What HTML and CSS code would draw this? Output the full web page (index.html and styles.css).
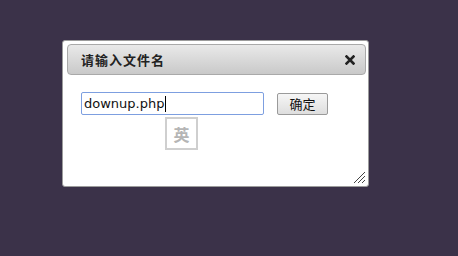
FILE: index.html
```html
<!DOCTYPE html>
<html>
<head>
<meta charset="utf-8">
<link rel="stylesheet" href="styles.css">
</head>
<body>
<div class="dialog">
  <div class="titlebar">
    <span class="title">请输入文件名</span>
    <svg class="close" width="10" height="10" viewBox="0 0 10 10"><path d="M1.5 1.5 L8.5 8.5 M8.5 1.5 L1.5 8.5" stroke="#222" stroke-width="2.6" stroke-linecap="square"/></svg>
  </div>
  <div class="content">
    <div class="field">
      <div class="input"><span class="val">downup.php</span><span class="caret"></span></div>
      <div class="ime">英</div>
    </div>
    <button class="btn">确定</button>
  </div>
  <svg class="grip" width="13" height="13" viewBox="0 0 13 13"><path d="M12 1 L1 12 M12 5 L5 12 M12 9 L9 12" stroke="#444" stroke-width="1"/></svg>
</div>
</body>
</html>
```
FILE: styles.css
```css
html, body { margin: 0; padding: 0; }
body {
  background: #3b3249;
  width: 458px;
  height: 256px;
  padding: 40px 0 0 62px;
  box-sizing: border-box;
  font-family: "DejaVu Sans", "Noto Sans CJK SC", sans-serif;
}
.dialog {
  position: relative;
  width: 307px;
  height: 147px;
  box-sizing: border-box;
  background: #fff;
  border: 1px solid #9c9c9c;
  border-radius: 3px;
  padding: 3px 2px 3px 4px;
}
.titlebar {
  height: 31px;
  box-sizing: border-box;
  border: 1px solid #a9a9a9;
  border-radius: 4px;
  background: linear-gradient(#e9e9e9, #c9c9c9);
  display: flex;
  align-items: center;
  justify-content: space-between;
  padding: 0 10px 0 13px;
}
.title {
  font-family: "Noto Sans CJK SC", sans-serif;
  font-weight: bold;
  font-size: 13px;
  letter-spacing: 1px;
  color: #222;
}
.close { display: block; margin-top: 1px; }
.content {
  display: flex;
  align-items: flex-start;
  padding: 17px 0 0 14px;
  gap: 13px;
}
.field { position: relative; }
.input {
  width: 183px;
  height: 23px;
  box-sizing: border-box;
  border: 1px solid #7d9fe0;
  border-radius: 2px;
  display: flex;
  align-items: center;
  padding-left: 2px;
  font-size: 13px;
  color: #111;
}
.caret {
  display: inline-block;
  width: 1px;
  height: 16px;
  background: #000;
  margin-left: 1px;
}
.ime {
  position: absolute;
  left: 84px;
  top: 25px;
  width: 33px;
  height: 33px;
  box-sizing: border-box;
  border: 2px solid #cfcfcf;
  background: #fff;
  color: #b5b5b5;
  font-family: "Noto Sans CJK SC", sans-serif;
  font-weight: bold;
  font-size: 16px;
  display: flex;
  align-items: center;
  justify-content: center;
}
.btn {
  margin-top: 1px;
  width: 51px;
  height: 22px;
  box-sizing: border-box;
  border: 1px solid #9a9a9a;
  border-radius: 2px;
  background: linear-gradient(#f6f6f6, #dedede);
  font-family: "Noto Sans CJK SC", sans-serif;
  font-size: 13px;
  color: #111;
  padding: 0;
  line-height: 18px;
}
.grip {
  position: absolute;
  right: 2px;
  bottom: 2px;
}
```
